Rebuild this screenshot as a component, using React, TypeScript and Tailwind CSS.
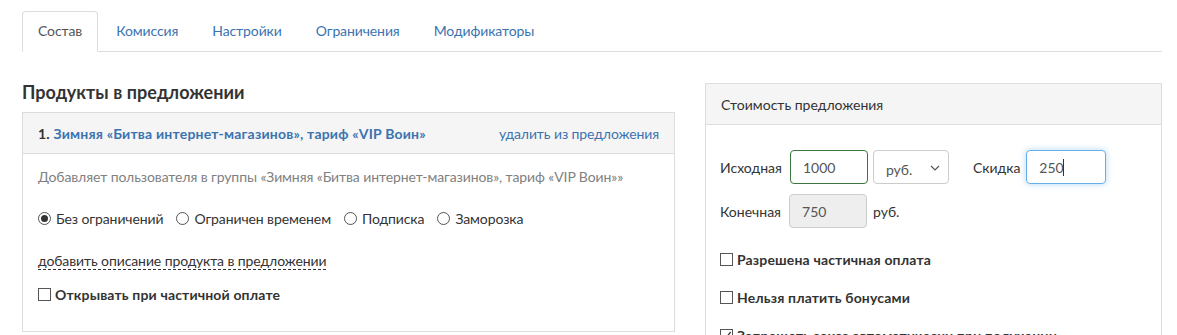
import { useState } from "react";

const TABS = ["Состав", "Комиссия", "Настройки", "Ограничения", "Модификаторы"];

const font = { fontFamily: "Lato, 'Open Sans', Arial, sans-serif" };

function Radio({ label, checked }: { label: string; checked?: boolean }) {
  return (
    <label className="mr-[13px] inline-flex items-center gap-[5px] text-[14px] tracking-[-0.1px] text-[#333]">
      <span className="flex h-[13px] w-[13px] items-center justify-center rounded-full border border-[#555] bg-white">
        {checked ? <span className="h-[7px] w-[7px] rounded-full bg-[#333]" /> : null}
      </span>
      {label}
    </label>
  );
}

function Check({ label, checked }: { label: string; checked?: boolean }) {
  return (
    <label className="flex h-[20px] items-center gap-[4px] text-[14px] font-bold tracking-[0.15px] text-[#333]">
      <span className="flex h-[13px] w-[13px] shrink-0 items-center justify-center border border-[#555] bg-white">
        {checked ? (
          <svg viewBox="0 0 12 12" className="h-[11px] w-[11px]" aria-hidden>
            <path d="M2 6.5 L5 9.5 L10.5 2" fill="none" stroke="#333" strokeWidth="1.4" />
          </svg>
        ) : null}
      </span>
      {label}
    </label>
  );
}

export default function App() {
  const [tab, setTab] = useState(0);
  const [price, setPrice] = useState("1000");
  const [discount, setDiscount] = useState("250");

  return (
    <div className="h-[335px] overflow-hidden bg-white px-[22px] pt-[11px]" style={font}>
      {/* вкладки */}
      <div className="flex w-[1140px] border-b border-[#ddd]">
        {TABS.map((t, i) => (
          <button
            key={t}
            type="button"
            onClick={() => setTab(i)}
            className={
              i === tab
                ? "-mb-px mr-[2px] h-[41px] rounded-t-[4px] border border-[#ddd] border-b-white bg-white px-[15px] pb-[2px] text-[14px] tracking-[-0.1px] text-[#555]"
                : "-mb-px mr-[2px] h-[41px] border border-transparent px-[15px] pb-[2px] text-[14px] tracking-[-0.1px] text-[#3b73af]"
            }
          >
            {t}
          </button>
        ))}
      </div>

      <div className="flex w-[1140px] gap-[30px]">
        {/* слева: продукты */}
        <div className="w-[653px]">
          <h3 className="mt-[30px] text-[18px] leading-[20px] font-bold tracking-[0.05px] text-[#333]">Продукты в предложении</h3>
          <div className="mt-[10px] border border-[#ddd]">
            <div className="flex h-[41px] items-center justify-between border-b border-[#ddd] bg-[#f5f5f5] px-[15px] text-[14px]">
              <span className="font-bold tracking-[0.2px] text-[#333]">
                1. <a className="text-[#3b73af]">Зимняя «Битва интернет-магазинов», тариф «VIP Воин»</a>
              </span>
              <a className="tracking-[-0.1px] text-[#3b73af]">удалить из предложения</a>
            </div>
            <div className="px-[15px] pt-[13px] pb-[27px]">
              <p className="text-[14px] leading-[20px] tracking-[-0.1px] text-[#808080]">
                Добавляет пользователя в группы «Зимняя «Битва интернет-магазинов», тариф «VIP Воин»»
              </p>
              <div className="mt-[21px] flex h-[20px] items-center">
                <Radio label="Без ограничений" checked />
                <Radio label="Ограничен временем" />
                <Radio label="Подписка" />
                <Radio label="Заморозка" />
              </div>
              <div className="mt-[20px] h-[20px]">
                <span className="border-b border-dashed border-[#333] text-[14px] leading-[20px] tracking-[-0.1px] text-[#333]">
                  добавить описание продукта в предложении
                </span>
              </div>
              <div className="mt-[16px]">
                <Check label="Открывать при частичной оплате" />
              </div>
            </div>
          </div>
        </div>

        {/* справа: стоимость */}
        <div className="mt-[31px] flex-1 self-start border border-[#ddd]">
          <div className="flex h-[41px] items-center border-b border-[#ddd] bg-[#f5f5f5] px-[15px] text-[14px] text-[#333]">
            Стоимость предложения
          </div>
          <div className="px-[14px] pt-[25px] pb-[20px] text-[14px] text-[#333]">
            <div className="flex items-center">
              <span className="mr-[8px]">Исходная</span>
              <input
                value={price}
                onChange={(e) => setPrice(e.target.value)}
                className="h-[34px] w-[78px] rounded-[4px] border border-[#3c763d] px-[12px] text-[14px] text-[#555] outline-none"
                style={font}
              />
              <div className="relative ml-[5px] h-[34px] w-[76px] rounded-[4px] border border-[#ccc] bg-white">
                <span className="absolute top-[8px] left-[12px] text-[14px] text-[#555]">руб.</span>
                <svg viewBox="0 0 10 6" className="absolute top-[14px] right-[8px] h-[6px] w-[10px]" aria-hidden>
                  <path d="M1 1 L5 5 L9 1" fill="none" stroke="#555" strokeWidth="1.2" />
                </svg>
              </div>
              <span className="mr-[6px] ml-[24px]">Скидка</span>
              <div className="relative">
                <input
                  value={discount}
                  onChange={(e) => setDiscount(e.target.value)}
                  className="h-[34px] w-[80px] rounded-[4px] border border-[#66afe9] px-[12px] text-[14px] text-[#555] shadow-[0_0_6px_rgba(102,175,233,0.5)] outline-none"
                  style={font}
                />
                <span className="pointer-events-none absolute top-[9px] left-[37px] h-[17px] w-px bg-[#333]" />
              </div>
            </div>
            <div className="mt-[10px] flex items-center">
              <span className="mr-[8px]">Конечная</span>
              <input
                value="750"
                disabled
                className="h-[34px] w-[78px] rounded-[4px] border border-[#ccc] bg-[#eee] px-[12px] text-[14px] text-[#555]"
                style={font}
              />
              <span className="ml-[6px]">руб.</span>
            </div>
            <div className="mt-[21px] flex flex-col gap-[18px]">
              <Check label="Разрешена частичная оплата" />
              <Check label="Нельзя платить бонусами" />
              <Check label="Запрещать заказ автоматически при получении" checked />
            </div>
          </div>
        </div>
      </div>
    </div>
  );
}
